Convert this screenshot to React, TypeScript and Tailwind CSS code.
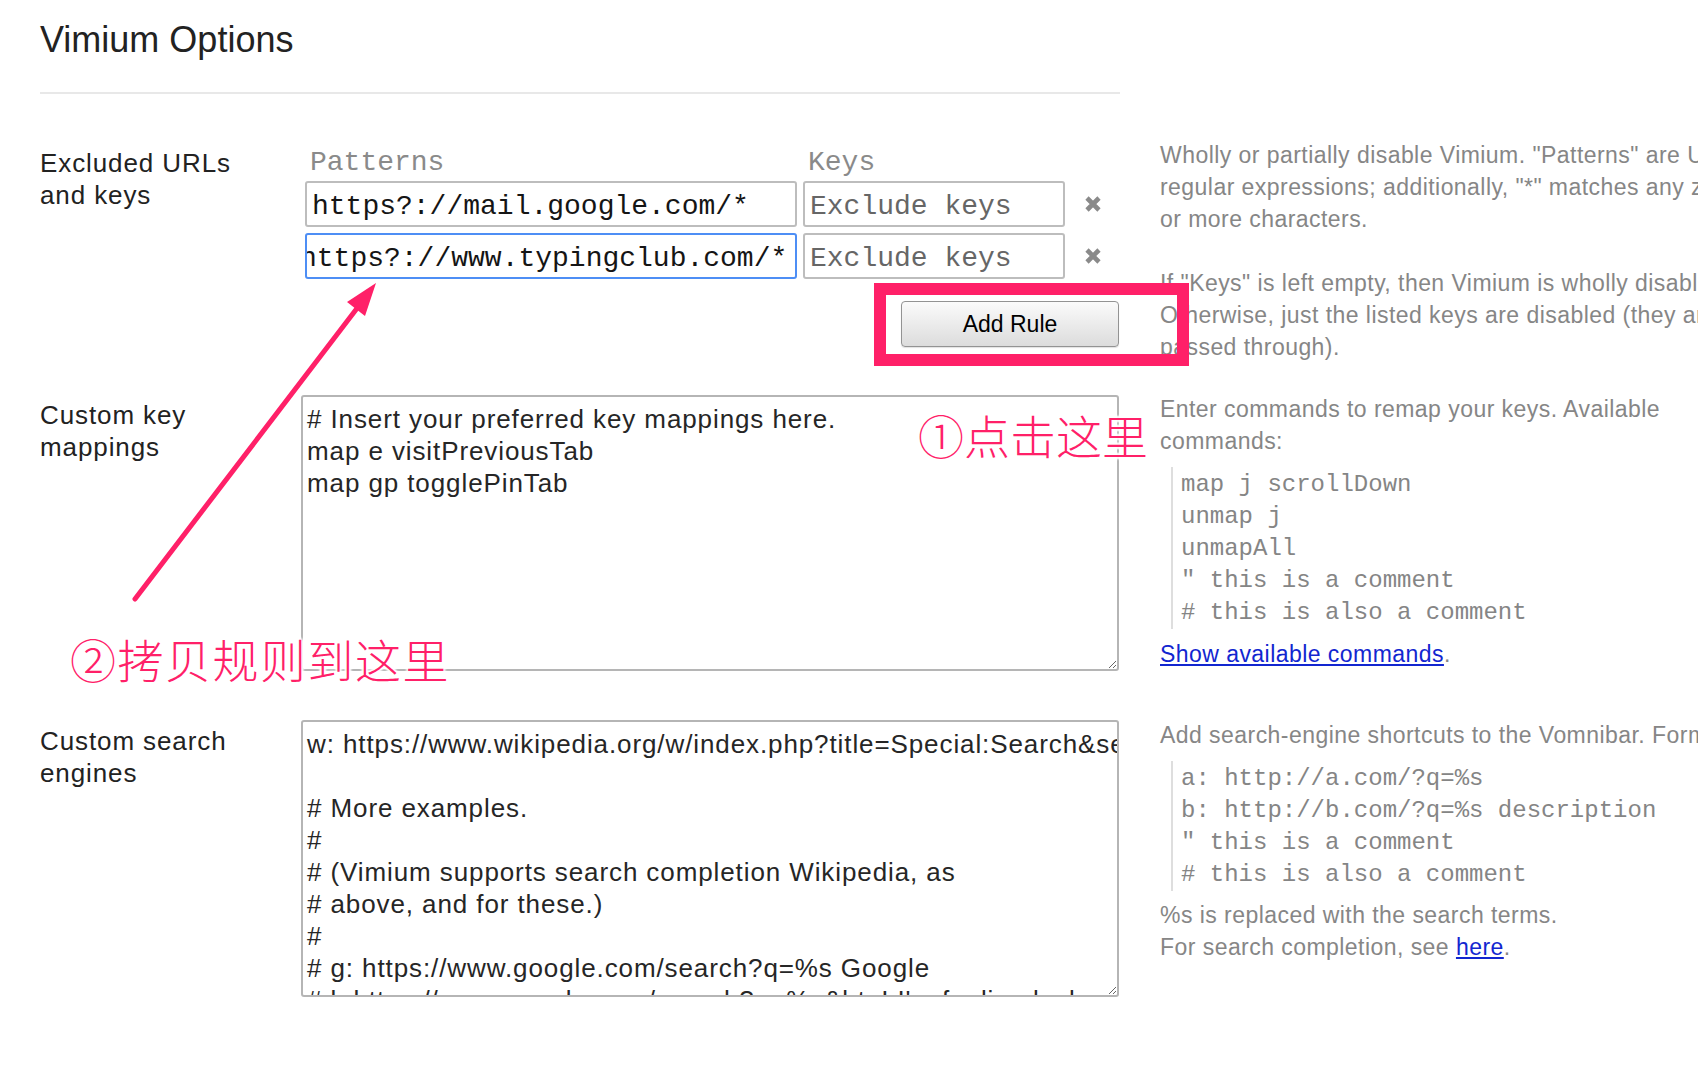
import React from "react";

const keyMappings = `# Insert your preferred key mappings here.
map e visitPreviousTab
map gp togglePinTab`;

const searchEngines = `w: https://www.wikipedia.org/w/index.php?title=Special:Search&search=%s Wikipedia

# More examples.
#
# (Vimium supports search completion Wikipedia, as
# above, and for these.)
#
# g: https://www.google.com/search?q=%s Google
# l: https://www.google.com/search?q=%s&btnI I'm feeling lucky...
# y: https://www.youtube.com/results?search_query=%s Youtube
# gm: https://www.google.com/maps?q=%s Google maps
# b: https://www.bing.com/search?q=%s Bing
# d: https://duckduckgo.com/?q=%s DuckDuckGo`;

function XIcon() {
  return (
    <svg width="20" height="20" viewBox="0 0 20 20" className="ml-[18px] shrink-0">
      <path d="M4 4 L16 16 M16 4 L4 16" stroke="#8a8a8a" strokeWidth="4.6" strokeLinecap="butt" />
    </svg>
  );
}

export default function App() {
  const label = "w-[261px] shrink-0 text-[26px] leading-[32px] tracking-[0.9px] text-[#222]";
  const desc =
    "ml-[41px] whitespace-nowrap text-[23px] leading-[32px] tracking-[0.45px] text-[#868686]";
  const quote =
    "ml-[11px] border-l-2 border-[#dedede] pl-[8px] pt-[2px] font-['Liberation_Mono',monospace] text-[24px] leading-[32px] tracking-normal text-[#858585] whitespace-pre";
  const mono = "font-['Liberation_Mono',monospace] text-[28px] tracking-normal";
  const halo =
    "[text-shadow:0_0_3px_#fff,0_0_3px_#fff,0_0_4px_#fff,2px_0_2px_#fff,-2px_0_2px_#fff,0_2px_2px_#fff,0_-2px_2px_#fff]";
  const ta =
    "block w-[818px] overflow-hidden rounded-[3px] border-2 border-[#b5b5b5] pl-[4px] pt-[6px] text-[26px] leading-[32px] tracking-[0.9px] text-[#262626] outline-none";

  return (
    <div className="relative w-[1698px] h-[1068px] overflow-hidden bg-white font-['Liberation_Sans',Arial,sans-serif]">
      <div className="pl-[40px] pt-[18px]">
        <h1 className="text-[36px] leading-[43px] text-[#222]">Vimium Options</h1>
        <div className="mt-[31px] h-[2px] w-[1080px] bg-[#e8e8e8]" />

        {/* Excluded URLs */}
        <div className="mt-[45px] flex items-start">
          <div className={`${label} pt-[8px]`}>
            Excluded URLs
            <br />
            and keys
          </div>
          <div className="w-[818px] shrink-0 pt-[8px] pl-[4px]">
            <div className={`flex h-[32px] leading-[32px] text-[#8a8a8a] ${mono}`}>
              <div className="w-[498px] pl-[5px]">Patterns</div>
              <div className="pl-[5px]">Keys</div>
            </div>
            <div className="mt-[2px] flex items-center">
              <div
                className={`flex h-[46px] w-[492px] items-center overflow-hidden rounded-[3px] border-2 border-[#bdbdbd] pl-[5px] pt-[5px] whitespace-nowrap text-[#151515] ${mono}`}
              >
                https?://mail.google.com/*
              </div>
              <div
                className={`ml-[6px] flex h-[46px] w-[262px] items-center rounded-[3px] border-2 border-[#bdbdbd] pl-[5px] pt-[5px] whitespace-nowrap text-[#666] ${mono}`}
              >
                Exclude keys
              </div>
              <XIcon />
            </div>
            <div className="mt-[6px] flex items-center">
              <div
                className={`flex h-[46px] w-[492px] items-center overflow-hidden rounded-[3px] border-2 border-[#4d8ef5] pl-[5px] pt-[5px] whitespace-nowrap text-[#151515] ${mono}`}
              >
                <span className="-ml-[12px]">https?://www.typingclub.com/*</span>
              </div>
              <div
                className={`ml-[6px] flex h-[46px] w-[262px] items-center rounded-[3px] border-2 border-[#bdbdbd] pl-[5px] pt-[5px] whitespace-nowrap text-[#666] ${mono}`}
              >
                Exclude keys
              </div>
              <XIcon />
            </div>
            <div className="mt-[22px] flex justify-end">
              <button className="h-[46px] w-[218px] rounded-[4px] border border-[#939393] bg-linear-to-b from-[#fbfbfb] to-[#dcdcdc] text-[23px] text-black shadow-[0_1px_1px_rgba(0,0,0,0.12)]">
                Add Rule
              </button>
            </div>
          </div>
          <div className={desc}>
            Wholly or partially disable Vimium. "Patterns" are URL
            <br />
            regular expressions; additionally, "*" matches any zero
            <br />
            or more characters.
            <br />
            <br />
            If "Keys" is left empty, then Vimium is wholly disabled.
            <br />
            Otherwise, just the listed keys are disabled (they are
            <br />
            passed through).
          </div>
        </div>

        {/* Custom key mappings */}
        <div className="mt-[30px] flex items-start">
          <div className={`${label} pt-[6px]`}>
            Custom key
            <br />
            mappings
          </div>
          <div className="w-[818px] shrink-0 pt-[2px]">
            <textarea readOnly wrap="off" value={keyMappings} className={`${ta} h-[276px]`} />
          </div>
          <div className={desc}>
            Enter commands to remap your keys. Available
            <br />
            commands:
            <div className={`mt-[10px] ${quote}`}>
              {`map j scrollDown\nunmap j\nunmapAll\n" this is a comment\n# this is also a comment`}
            </div>
            <div className="mt-[9px]">
              <a href="#" className="text-[#1226d0] underline">
                Show available commands
              </a>
              .
            </div>
          </div>
        </div>

        {/* Custom search engines */}
        <div className="mt-[48px] flex items-start">
          <div className={`${label} pt-[6px]`}>
            Custom search
            <br />
            engines
          </div>
          <div className="w-[818px] shrink-0 pt-[1px]">
            <textarea readOnly wrap="off" value={searchEngines} className={`${ta} h-[277px]`} />
          </div>
          <div className={desc}>
            Add search-engine shortcuts to the Vomnibar. Format:
            <div className={`mt-[10px] ${quote}`}>
              {`a: http://a.com/?q=%s\nb: http://b.com/?q=%s description\n" this is a comment\n# this is also a comment`}
            </div>
            <div className="mt-[8px]">
              %s is replaced with the search terms.
              <br />
              For search completion, see{" "}
              <a href="#" className="text-[#1226d0] underline">
                here
              </a>
              .
            </div>
          </div>
        </div>
      </div>

      {/* Annotation overlays */}
      <div className="absolute left-[874px] top-[283px] h-[83px] w-[315px] border-[12px] border-[#ff2068]" />

      <svg
        className="pointer-events-none absolute left-0 top-0"
        width="1698"
        height="1068"
        viewBox="0 0 1698 1068"
      >
        <line x1="135" y1="599" x2="358" y2="307" stroke="#ff2068" strokeWidth="5" strokeLinecap="round" />
        <polygon points="376,283 365,316 347,302" fill="#ff2068" />
      </svg>

      <div
        className={`absolute left-[918px] top-[411px] whitespace-nowrap font-['Noto_Sans_CJK_SC',sans-serif] text-[46px] leading-[46px] font-light text-[#ff2068] ${halo}`}
      >
        ①点击这里
      </div>
      <div
        className={`absolute left-[70px] top-[635px] whitespace-nowrap font-['Noto_Sans_CJK_SC',sans-serif] text-[46px] leading-[46px] tracking-[1.5px] font-light text-[#ff2068] ${halo}`}
      >
        ②拷贝规则到这里
      </div>
    </div>
  );
}
